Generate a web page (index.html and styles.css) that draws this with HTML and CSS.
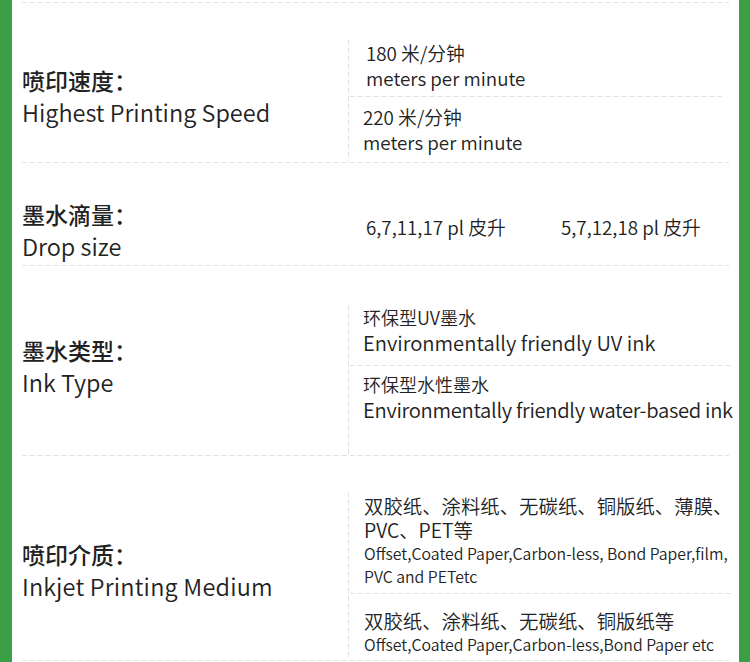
FILE: index.html
```html
<!DOCTYPE html>
<html lang="zh-CN">
<head>
<meta charset="utf-8">
<title>Specs</title>
<link rel="stylesheet" href="styles.css">
</head>
<body>
<div class="page">
  <div class="rule"></div>

  <div class="row row-1">
    <div class="label label-1">
      <div class="label-cn">喷印速度：</div>
      <div class="label-en">Highest Printing Speed</div>
    </div>
    <div class="rcol">
      <div class="cell cell-1a">
        <div class="t19">180 米/分钟</div>
        <div class="t19">meters per minute</div>
      </div>
      <div class="cell cell-1b">
        <div class="t19">220 米/分钟</div>
        <div class="t19">meters per minute</div>
      </div>
    </div>
  </div>

  <div class="row row-2">
    <div class="label label-2">
      <div class="label-cn">墨水滴量：</div>
      <div class="label-en">Drop size</div>
    </div>
    <div class="vals">
      <span class="val t19">6,7,11,17 pl 皮升</span>
      <span class="val t19">5,7,12,18 pl 皮升</span>
    </div>
  </div>

  <div class="row row-3">
    <div class="label label-3">
      <div class="label-cn">墨水类型：</div>
      <div class="label-en">Ink Type</div>
    </div>
    <div class="rcol">
      <div class="cell cell-3a">
        <div class="cn18">环保型UV墨水</div>
        <div class="en20">Environmentally friendly UV ink</div>
      </div>
      <div class="cell cell-3b">
        <div class="cn18">环保型水性墨水</div>
        <div class="en20 tight">Environmentally friendly water-based ink</div>
      </div>
    </div>
  </div>

  <div class="row row-4">
    <div class="label label-4">
      <div class="label-cn">喷印介质：</div>
      <div class="label-en label-en-wide">Inkjet Printing Medium</div>
    </div>
    <div class="rcol">
      <div class="cell cell-4a">
        <div class="cn20">双胶纸、涂料纸、无碳纸、铜版纸、薄膜、</div>
        <div class="cn20">PVC、PET等</div>
        <div class="en16">Offset,Coated Paper,Carbon-less, Bond Paper,film,</div>
        <div class="en16">PVC and PETetc</div>
      </div>
      <div class="cell cell-4b">
        <div class="cn20">双胶纸、涂料纸、无碳纸、铜版纸等</div>
        <div class="en16">Offset,Coated Paper,Carbon-less,Bond Paper etc</div>
      </div>
    </div>
  </div>
</div>
</body>
</html>
```

FILE: styles.css
```css
html, body {
  margin: 0;
  padding: 0;
  background: #ffffff;
}

body {
  font-family: "Noto Sans CJK SC", "Noto Sans", sans-serif;
  font-weight: 350;
  color: #222222;
}

.page {
  width: 750px;
  height: 662px;
  box-sizing: border-box;
  border-left: 12px solid #3b9f45;
  border-right: 11px solid #3b9f45;
  padding: 2px 10px 0 10px;
  overflow: hidden;
  background: #ffffff;
}

.rule {
  height: 1px;
  background-image: repeating-linear-gradient(90deg, #e2e2e2 0 5px, transparent 5px 8px);
}

.row {
  display: grid;
  grid-template-columns: 326px 1fr;
  padding-bottom: 1px;
  background-image: repeating-linear-gradient(90deg, #e2e2e2 0 5px, transparent 5px 8px);
  background-size: 100% 1px;
  background-position: left bottom;
  background-repeat: no-repeat;
}

.row-1 { padding-top: 37px; }
.row-2 { padding-top: 35px; height: 67px; }
.row-3 { padding-top: 39px; height: 150px; }
.row-4 { padding-top: 36px; }

.label {
  align-self: center;
  white-space: nowrap;
}

.label-1 { padding-bottom: 10px; }
.label-2 { align-self: start; }
.label-3 { padding-bottom: 28px; }
.label-4 { padding-bottom: 13px; }

.label-cn {
  font-size: 23px;
  line-height: 32px;
  font-weight: 500;
}

.label-en {
  font-size: 23.5px;
  line-height: 32px;
}

.label-en-wide {
  letter-spacing: 0.2px;
}

.rcol {
  display: flex;
  flex-direction: column;
  background-image: repeating-linear-gradient(180deg, #e2e2e2 0 5px, transparent 5px 8px);
  background-size: 1px 100%;
  background-position: left top;
  background-repeat: no-repeat;
}

.cell {
  margin: 0 7px 0 2px;
  padding-left: 13px;
  white-space: nowrap;
}

.cell-1a,
.cell-3a,
.cell-4a {
  background-image: repeating-linear-gradient(90deg, #e2e2e2 0 5px, transparent 5px 8px);
  background-size: 100% 1px;
  background-position: left bottom;
  background-repeat: no-repeat;
}

.cell-1a { padding-top: 0; padding-bottom: 7px; padding-left: 16px; }
.cell-1b { padding-top: 7px; padding-bottom: 8px; }
.cell-3a { padding-top: 0; padding-bottom: 9px; }
.cell-3b { padding-top: 6px; flex: 1; }
.cell-4a { padding-top: 2px; padding-bottom: 6px; padding-left: 14px; }
.cell-4b { padding-top: 15px; padding-bottom: 4px; padding-left: 14px; }

.t19 {
  font-size: 18.8px;
  line-height: 25px;
}

.cn18 {
  font-size: 18px;
  line-height: 24px;
}

.en20 {
  font-size: 20.2px;
  line-height: 28px;
}

.tight {
  letter-spacing: -0.3px;
}

.cn20 {
  font-size: 19.4px;
  line-height: 24px;
}

.en16 {
  font-size: 15.8px;
  line-height: 23px;
}

.vals {
  display: flex;
  align-self: start;
  padding-top: 16px;
  padding-left: 18px;
}

.val {
  width: 195px;
  white-space: nowrap;
}
```
